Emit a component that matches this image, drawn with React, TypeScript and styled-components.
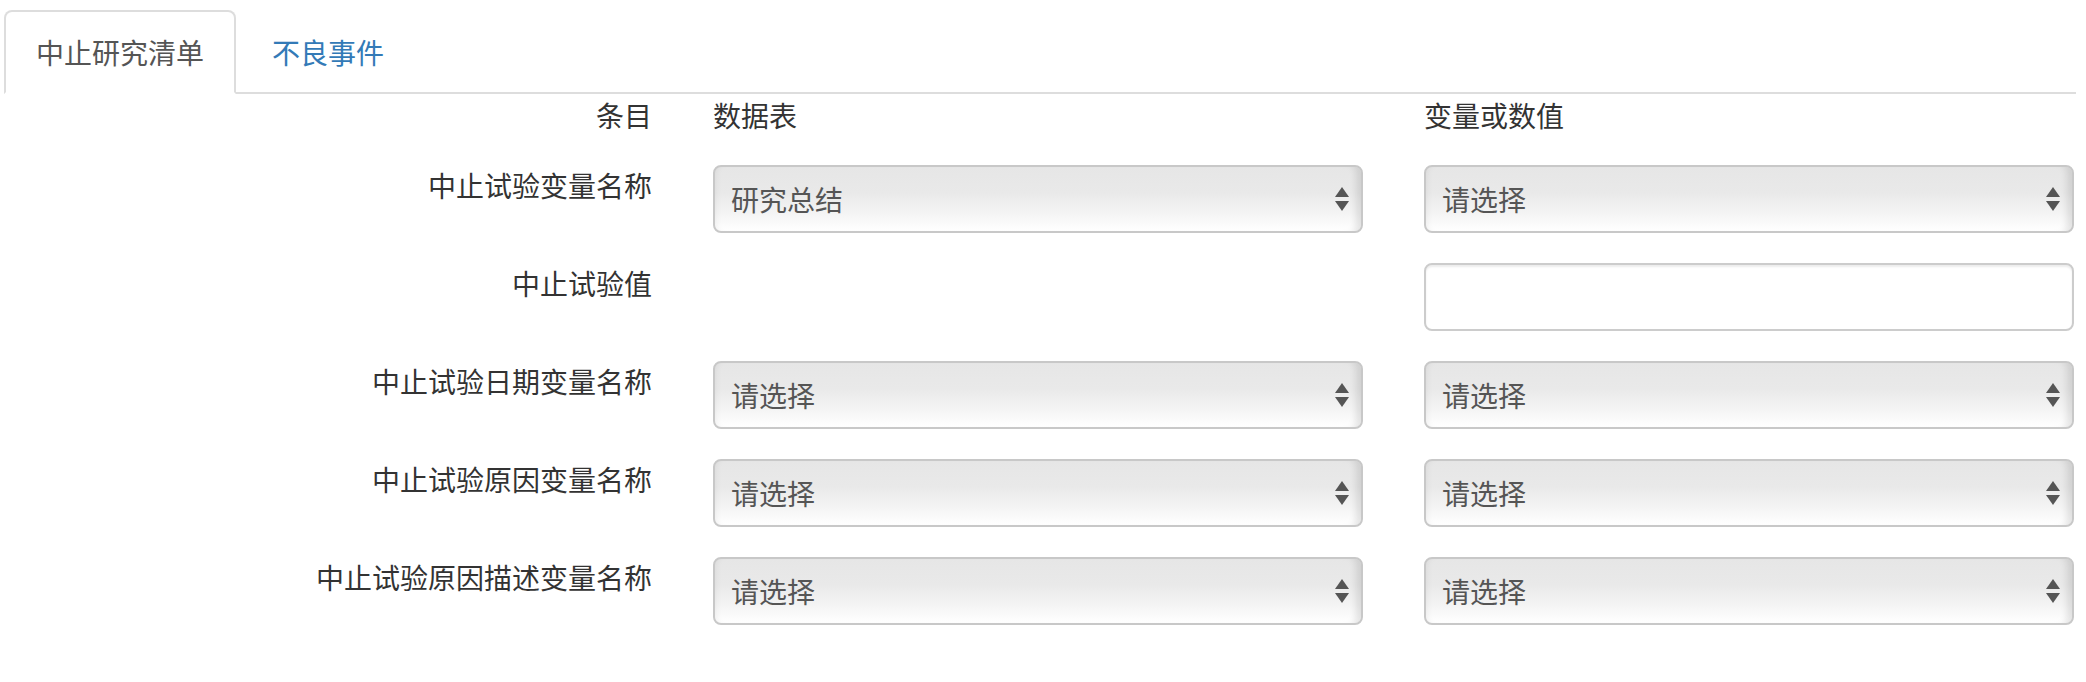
import { Fragment } from 'react';
import styled, { createGlobalStyle } from 'styled-components';

const GlobalStyle = createGlobalStyle`
    html, body {
        margin: 0;
        padding: 0;
        background: #fff;
    }
    body {
        font-family: "Noto Sans CJK SC", "Noto Sans", "Liberation Sans", sans-serif;
        font-size: 28px;
        color: #333;
    }
`;

const Page = styled.div`
    width: 2072px;
    padding: 10px 0 0 4px;
`;

const Tabs = styled.ul`
    display: flex;
    margin: 0;
    padding: 0;
    list-style: none;
    border-bottom: 2px solid #ddd;
`;

const TabItem = styled.li`
    margin: 0 4px -2px 0;
`;

const TabLink = styled.a<{ $active?: boolean }>`
    display: block;
    padding: 20px 30px;
    line-height: 40px;
    font-size: 28px;
    text-decoration: none;
    cursor: pointer;
    border: 2px solid ${(p) => (p.$active ? '#ddd' : 'transparent')};
    border-bottom-color: transparent;
    border-radius: 8px 8px 0 0;
    background: ${(p) => (p.$active ? '#fff' : 'transparent')};
    color: ${(p) => (p.$active ? '#555' : '#337ab7')};
`;

const Form = styled.form`
    display: grid;
    grid-template-columns: 648px 650px 650px;
    column-gap: 61px;
    row-gap: 30px;
    margin-top: 1px;
`;

const Label = styled.label<{ $align?: 'left' | 'right' }>`
    display: block;
    line-height: 40px;
    font-size: 28px;
    color: #333;
    text-align: ${(p) => p.$align ?? 'right'};
`;

const SelectBox = styled.div`
    position: relative;
    height: 68px;
`;

const Select = styled.select`
    appearance: none;
    -webkit-appearance: none;
    width: 100%;
    height: 68px;
    margin: 0;
    padding: 0 50px 0 16px;
    font-family: inherit;
    font-size: 28px;
    color: #555;
    border: 2px solid #c8c8c8;
    border-radius: 8px;
    outline: none;
    background: linear-gradient(to bottom, #e6e6e6 0%, #e9e9e9 40%, #f4f4f4 72%, #ffffff 100%);
    box-shadow: inset -10px 0 7px -5px rgba(0, 0, 0, 0.1), inset 6px 0 6px -5px rgba(0, 0, 0, 0.06);
`;

const Arrows = styled.svg`
    position: absolute;
    top: 22px;
    right: 14px;
    pointer-events: none;
`;

const TextInput = styled.input`
    box-sizing: border-box;
    width: 100%;
    height: 68px;
    margin: 0;
    padding: 0 24px;
    font-family: inherit;
    font-size: 28px;
    color: #555;
    background: #fff;
    border: 2px solid #ccc;
    border-radius: 8px;
    outline: none;
    box-shadow: inset 0 2px 2px rgba(0, 0, 0, 0.075);
`;

function Dropdown({ value }: { value: string }) {
    return (
        <SelectBox>
            <Select defaultValue={value}>
                <option value={value}>{value}</option>
            </Select>
            <Arrows width="14" height="24" viewBox="0 0 14 24">
                <polygon points="7,0 14,10 0,10" fill="#555" />
                <polygon points="0,14 14,14 7,24" fill="#555" />
            </Arrows>
        </SelectBox>
    );
}

interface Row {
    label: string;
    table?: string;
    value: 'select' | 'input';
}

const rows: Row[] = [
    { label: '中止试验变量名称', table: '研究总结', value: 'select' },
    { label: '中止试验值', value: 'input' },
    { label: '中止试验日期变量名称', table: '请选择', value: 'select' },
    { label: '中止试验原因变量名称', table: '请选择', value: 'select' },
    { label: '中止试验原因描述变量名称', table: '请选择', value: 'select' },
];

export default function App() {
    return (
        <Page>
            <GlobalStyle />
            <Tabs>
                <TabItem><TabLink $active>中止研究清单</TabLink></TabItem>
                <TabItem><TabLink>不良事件</TabLink></TabItem>
            </Tabs>
            <Form>
                <Label>条目</Label>
                <Label $align="left">数据表</Label>
                <Label $align="left">变量或数值</Label>
                {rows.map((row) => (
                    <Fragment key={row.label}>
                        <Label>{row.label}</Label>
                        {row.table ? <Dropdown value={row.table} /> : <div />}
                        {row.value === 'select' ? <Dropdown value="请选择" /> : <TextInput type="text" />}
                    </Fragment>
                ))}
            </Form>
        </Page>
    );
}
